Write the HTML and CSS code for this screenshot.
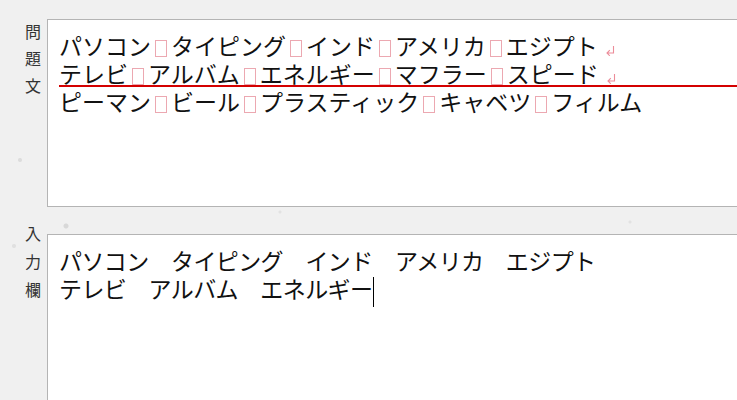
FILE: index.html
```html
<!DOCTYPE html>
<html lang="ja">
<head>
    <meta charset="UTF-8">
    <meta name="viewport" content="width=device-width, initial-scale=1.0">
    <title>タイピング練習</title>
    <link rel="stylesheet" href="styles.css">
</head>
<body>

<div class="page">
    <!-- 問題文 -->
    <div class="row">
        <div class="label label-top">
            <span>問</span><span>題</span><span>文</span>
        </div>
        <div class="box box-question">
            <div class="line">パソコン<span class="sp"></span>タイピング<span class="sp"></span>インド<span class="sp"></span>アメリカ<span class="sp"></span>エジプト<svg class="ret" width="11" height="11" viewBox="0 0 11 11"><path d="M8.5 1 V8 H2 M4.8 5.2 L2 8 L4.8 10.8" fill="none" stroke="#ec8c99" stroke-width="1.1"/></svg></div>
            <div class="line current">テレビ<span class="sp"></span>アルバム<span class="sp"></span>エネルギー<span class="sp"></span>マフラー<span class="sp"></span>スピード<svg class="ret" width="11" height="11" viewBox="0 0 11 11"><path d="M8.5 1 V8 H2 M4.8 5.2 L2 8 L4.8 10.8" fill="none" stroke="#ec8c99" stroke-width="1.1"/></svg></div>
            <div class="line">ピーマン<span class="sp"></span>ビール<span class="sp"></span>プラスティック<span class="sp"></span>キャベツ<span class="sp"></span>フィルム</div>
        </div>
    </div>

    <!-- 入力欄 -->
    <div class="row">
        <div class="label label-input">
            <span>入</span><span>力</span><span>欄</span>
        </div>
        <div class="box box-input">
            <div class="line">パソコン　タイピング　インド　アメリカ　エジプト</div>
            <div class="line">テレビ　アルバム　エネルギー<span class="caret"></span></div>
        </div>
    </div>
</div>

</body>
</html>
```

FILE: styles.css
```css
html, body {
    margin: 0;
    padding: 0;
    overflow: hidden;
}
body {
    font-family: "Noto Sans CJK JP", "Noto Sans", sans-serif;
    background-color: #f0f0f0;
    background-image: radial-gradient(circle at 20px 160px, #dcdcdc 1.5px, transparent 2.5px),
                      radial-gradient(circle at 66px 226px, #d8d8d8 2px, transparent 3px),
                      radial-gradient(circle at 14px 246px, #e0e0e0 1.5px, transparent 2.5px),
                      radial-gradient(circle at 280px 212px, #e2e2e2 1px, transparent 2px),
                      radial-gradient(circle at 630px 222px, #e2e2e2 1px, transparent 2px);
    width: 737px;
    height: 400px;
}
.page {
    padding-top: 19px;
    display: flex;
    flex-direction: column;
    gap: 27px;
}
.row {
    display: flex;
}
.label {
    width: 47px;
    flex-shrink: 0;
    box-sizing: border-box;
    padding-left: 25px;
    display: flex;
    flex-direction: column;
    font-size: 16px;
    color: #333;
}
.label span {
    height: 27px;
    line-height: 27px;
}
.label-top {
    margin-top: -1px;
}
.label-input {
    margin-top: -15px;
}
.label-input span {
    height: 28px;
    line-height: 28px;
}
.box {
    width: 720px;
    flex-shrink: 0;
    background: #ffffff;
    border: 1px solid #b4b4b4;
    box-sizing: border-box;
    padding: 11px 0 0 11px;
    font-size: 23px;
    color: #111;
}
.box-question {
    height: 188px;
}
.box-input {
    height: 200px;
    letter-spacing: -0.6px;
}
.line {
    height: 28px;
    line-height: 28px;
    white-space: nowrap;
}
.line.current {
    box-shadow: inset 0 -2px 0 #d40000;
}
.sp {
    display: inline-block;
    width: 12px;
    height: 17px;
    margin: 0 4px;
    border: 1px solid #eca8b1;
    box-sizing: border-box;
    vertical-align: -2px;
}
.ret {
    margin-left: 7px;
    vertical-align: -1px;
}
.caret {
    display: inline-block;
    width: 1px;
    height: 30px;
    background: #000;
    vertical-align: -9px;
    margin-left: 1px;
}
```
